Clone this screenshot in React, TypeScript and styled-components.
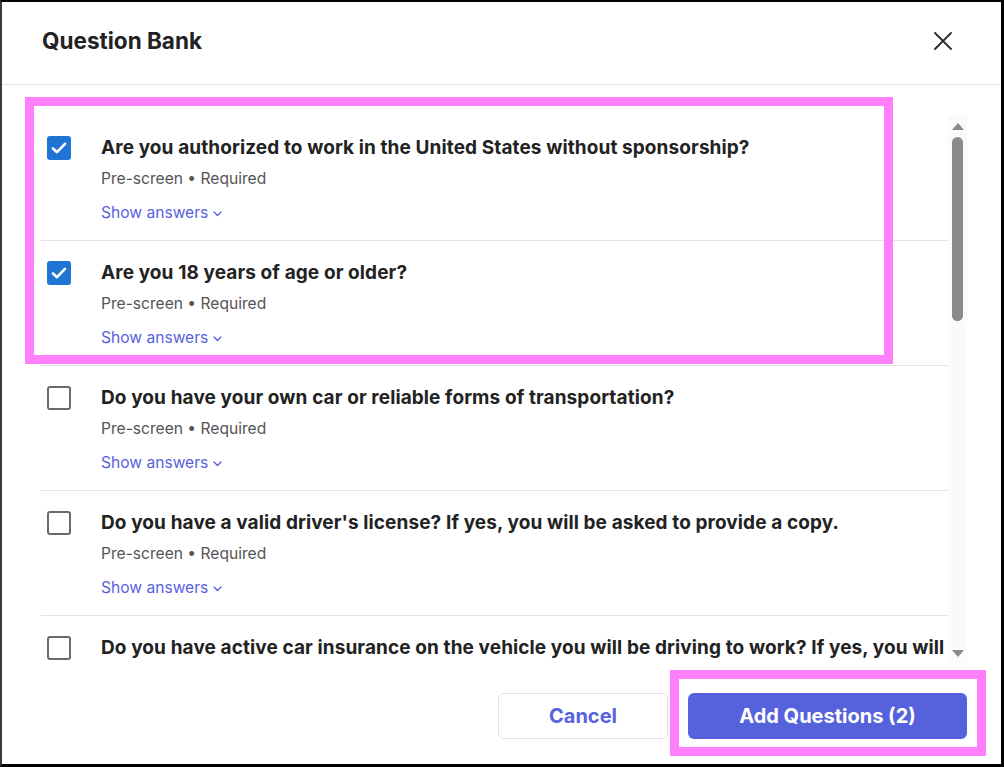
import React from "react";
import styled, { createGlobalStyle } from "styled-components";

const GlobalStyle = createGlobalStyle`
  html, body {
    margin: 0;
    padding: 0;
    background: #ffffff;
  }
  body {
    font-family: Inter, "Noto Sans", "Liberation Sans", sans-serif;
  }
`;

type Question = {
  text: string;
  checked: boolean;
};

const questions: Question[] = [
  {
    text: "Are you authorized to work in the United States without sponsorship?",
    checked: true
  },
  { text: "Are you 18 years of age or older?", checked: true },
  {
    text: "Do you have your own car or reliable forms of transportation?",
    checked: false
  },
  {
    text: "Do you have a valid driver's license? If yes, you will be asked to provide a copy.",
    checked: false
  },
  {
    text: "Do you have active car insurance on the vehicle you will be driving to work? If yes, you will be asked to provide a copy.",
    checked: false
  }
];

export default function App() {
  const selected = questions.filter(q => q.checked).length;

  return (
    <>
      <GlobalStyle />
      <Frame>
        <Header>
          <Title>Question Bank</Title>
          <CloseButton aria-label="Close">
            <svg width="18" height="18" viewBox="0 0 18 18">
              <path
                d="M1 1 L17 17 M17 1 L1 17"
                stroke="#2b2b2b"
                strokeWidth="1.8"
                strokeLinecap="round"
              />
            </svg>
          </CloseButton>
        </Header>

        <Body>
          <List>
            {questions.map((q, i) => (
              <Item key={i}>
                <Checkbox checked={q.checked}>
                  {q.checked && (
                    <svg width="18" height="18" viewBox="0 0 18 18">
                      <path
                        d="M3 9.5 L7 13.2 L15 4.8"
                        fill="none"
                        stroke="#fff"
                        strokeWidth="2.6"
                        strokeLinecap="round"
                        strokeLinejoin="round"
                      />
                    </svg>
                  )}
                </Checkbox>
                <ItemText>
                  <QuestionText>{q.text}</QuestionText>
                  <Meta>Pre-screen • Required</Meta>
                  <ShowAnswers>
                    Show answers
                    <svg width="9" height="6" viewBox="0 0 9 6">
                      <path
                        d="M1 1 L4.5 4.5 L8 1"
                        fill="none"
                        stroke="currentColor"
                        strokeWidth="1.4"
                        strokeLinecap="round"
                        strokeLinejoin="round"
                      />
                    </svg>
                  </ShowAnswers>
                </ItemText>
              </Item>
            ))}
          </List>

          <Scrollbar>
            <ArrowUp />
            <Thumb />
            <Spacer />
            <ArrowDown />
          </Scrollbar>
        </Body>

        <Footer>
          <CancelButton>Cancel</CancelButton>
          <PrimaryButton>Add Questions ({selected})</PrimaryButton>
        </Footer>

        <Highlight style={{ left: 23, top: 95, width: 868, height: 267 }} />
        <Highlight style={{ left: 668, top: 668, width: 316, height: 86 }} />
      </Frame>
    </>
  );
}

const Frame = styled.div`
  position: relative;
  width: 1004px;
  height: 767px;
  box-sizing: border-box;
  border-top: 2px solid #000;
  border-left: 2px solid #3a3a3a;
  border-right: 3px solid #000;
  border-bottom: 3px solid #000;
  background: #fff;
  display: flex;
  flex-direction: column;
  overflow: hidden;
`;

const Header = styled.div`
  height: 83px;
  flex: none;
  box-sizing: border-box;
  display: flex;
  align-items: center;
  justify-content: space-between;
  padding: 0 49px 5px 40px;
  border-bottom: 1px solid #e2e2ea;
`;

const Title = styled.h1`
  margin: 0;
  font-size: 22.5px;
  font-weight: 700;
  color: #222;
`;

const CloseButton = styled.button`
  border: none;
  background: none;
  padding: 0;
  display: flex;
  cursor: pointer;
`;

const Body = styled.div`
  flex: 1;
  min-height: 0;
  display: flex;
  padding-right: 34px;
  overflow: hidden;
`;

const List = styled.div`
  flex: 1;
  min-width: 0;
  padding: 31px 0 0 39px;
  overflow: hidden;
`;

const Item = styled.div`
  display: flex;
  align-items: flex-start;
  gap: 30px;
  padding: 20px 0 15px 6px;
  border-bottom: 1px solid #e2e2ea;
`;

const Checkbox = styled.span<{ checked: boolean }>`
  flex: none;
  width: 24px;
  height: 24px;
  box-sizing: border-box;
  border-radius: 3px;
  display: flex;
  align-items: center;
  justify-content: center;
  background: ${({ checked }) => (checked ? "#1f74d4" : "#fff")};
  border: ${({ checked }) => (checked ? "none" : "2px solid #6a6a6a")};
`;

const ItemText = styled.div`
  display: flex;
  flex-direction: column;
  min-width: 0;
`;

const QuestionText = styled.div`
  font-size: 19px;
  line-height: 24px;
  font-weight: 700;
  color: #222;
  letter-spacing: 0.1px;
`;

const Meta = styled.div`
  margin-top: 7px;
  font-size: 15.6px;
  line-height: 24px;
  color: #555;
`;

const ShowAnswers = styled.div`
  margin-top: 10px;
  font-size: 15.6px;
  line-height: 24px;
  color: #5862e0;
  display: flex;
  align-items: center;
  gap: 5px;

  svg {
    margin-top: 2px;
  }
`;

const Scrollbar = styled.div`
  flex: none;
  width: 19px;
  background: #fafafa;
  margin-top: 30px;
  display: flex;
  flex-direction: column;
  align-items: center;
  padding: 8px 0 6px;
  box-sizing: border-box;
`;

const ArrowUp = styled.div`
  width: 0;
  height: 0;
  border-left: 6px solid transparent;
  border-right: 6px solid transparent;
  border-bottom: 7px solid #8a8a8a;
`;

const ArrowDown = styled.div`
  width: 0;
  height: 0;
  border-left: 6px solid transparent;
  border-right: 6px solid transparent;
  border-top: 7px solid #8a8a8a;
`;

const Thumb = styled.div`
  margin-top: 7px;
  width: 11px;
  height: 184px;
  border-radius: 6px;
  background: #8a8a8a;
`;

const Spacer = styled.div`
  flex: 1;
`;

const Footer = styled.div`
  flex: none;
  height: 101px;
  display: flex;
  justify-content: flex-end;
  align-items: flex-start;
  gap: 20px;
  padding: 30px 34px 0 0;
  box-sizing: border-box;
`;

const CancelButton = styled.button`
  width: 170px;
  height: 46px;
  border: 1px solid #e0e0ea;
  border-radius: 6px;
  background: #fff;
  color: #5862e0;
  font-family: Inter, "Liberation Sans", sans-serif;
  font-size: 20px;
  font-weight: 700;
  cursor: pointer;
`;

const PrimaryButton = styled.button`
  width: 279px;
  height: 46px;
  border: none;
  border-radius: 6px;
  background: #5662dc;
  color: #fff;
  font-family: Inter, "Liberation Sans", sans-serif;
  font-size: 20px;
  font-weight: 700;
  cursor: pointer;
`;

const Highlight = styled.div`
  position: absolute;
  box-sizing: border-box;
  border: 9px solid #ff80fa;
  pointer-events: none;
`;
